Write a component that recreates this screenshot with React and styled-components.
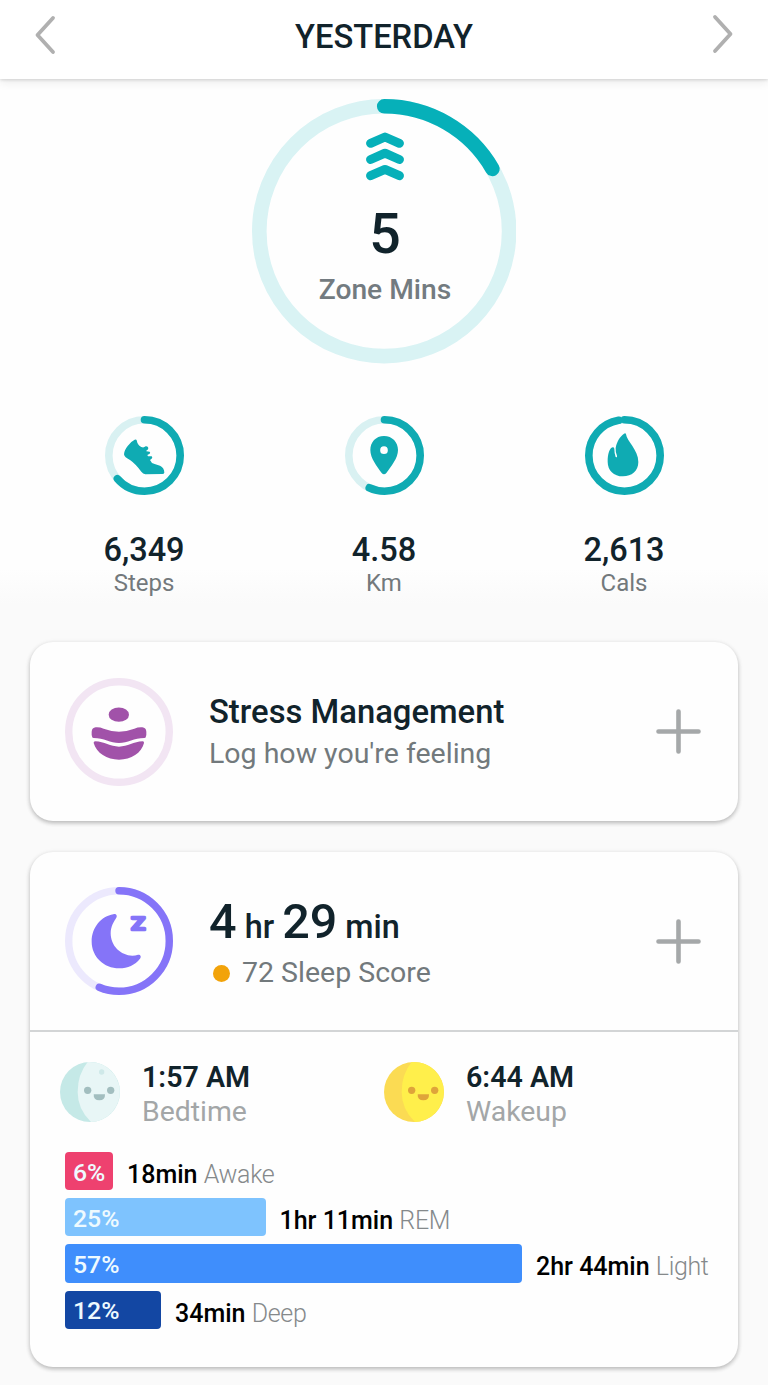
import styled, { createGlobalStyle } from "styled-components";

const stats = [
  { id: "steps", value: "6,349", label: "Steps", degrees: 229 },
  { id: "km", value: "4.58", label: "Km", degrees: 205 },
  { id: "cals", value: "2,613", label: "Cals", degrees: 350 },
];

const stages = [
  { name: "Awake", percent: 6, time: "18min", width: 48, color: "#ee416f" },
  { name: "REM", percent: 25, time: "1hr 11min", width: 200.5, color: "#7ec3fe" },
  { name: "Light", percent: 57, time: "2hr 44min", width: 457, color: "#3f8efc" },
  { name: "Deep", percent: 12, time: "34min", width: 96, color: "#1347a3" },
];

function Ring({ size, stroke, degrees, color, track, children }) {
  const c = size / 2;
  const r = c - stroke / 2;
  const length = 2 * Math.PI * r;
  return (
    <RingBox $size={size}>
      <svg width={size} height={size} fill="none" strokeWidth={stroke}>
        <circle cx={c} cy={c} r={r} stroke={track} />
        {degrees && (
          <circle
            cx={c}
            cy={c}
            r={r}
            stroke={color}
            strokeLinecap="round"
            strokeDasharray={`${(length * degrees) / 360} ${length}`}
            transform={`rotate(-90 ${c} ${c})`}
          />
        )}
      </svg>
      {children}
    </RingBox>
  );
}

function ZoneIcon() {
  return (
    <svg
      width="38"
      height="49"
      fill="none"
      stroke="#06b0b9"
      strokeWidth="9"
      strokeLinecap="round"
      strokeLinejoin="round"
    >
      <path d="M4.6 11.3 19 5 33.4 11.3" />
      <path d="M4.6 27.5 19 21.2 33.4 27.5" />
      <path d="M4.6 43.7 19 37.4 33.4 43.7" />
    </svg>
  );
}

function StatIcon({ id }) {
  return (
    <svg width="79" height="79" viewBox="0 0 237 237" fill="#0fabb3">
      {id === "steps" && (
        <path d="M89 71Q94 69 95 73Q98 89 109 93Q116 96 122 91Q129 90 130 96Q130 101 125 103L124 106L134 107Q137 110 134 113L127 117L129 121L140 121Q144 124 140 128L135 132Q138 141 149 144L165 149Q178 155 178 170Q177 174 172 174L121 175Q114 174 109 167Q91 143 75 132Q58 124 57 115Q57 104 68 90Q78 76 89 71Z" />
      )}
      {id === "km" && (
        <path
          fillRule="evenodd"
          d="M117 60C92 60 76 79 76 102C76 127 96 151 110 171Q117 179 124 171C138 151 159 127 159 102C159 79 142 60 117 60ZM117 91A11.500 11.500 0 1 1 117 114A11.500 11.500 0 1 1 117 91Z"
        />
      )}
      {id === "cals" && (
        <path d="M117 53Q122 50 123 55C125 75 160 102 160 138C160 165 140 181 114 181C86 181 68 163 68 137C68 114 73 97 83 94Q88 93 88 99Q88 113 92 123Q97 126 96 119Q91 108 92 96C95 78 104 62 117 53Z" />
      )}
    </svg>
  );
}

function StressIcon() {
  return (
    <svg width="108" height="108" viewBox="0 0 324 324" fill="#a152a9">
      <ellipse cx="161.500" cy="110" rx="30.500" ry="21.500" />
      <path d="M80 161Q81 149 92 148Q104 147 116 152Q140 161 162 161Q184 161 208 152Q220 147 232 148Q243 149 244 161Q245 170 242 178Q242 180 238 180C207 180 188 195 162 195C136 195 117 180 86 180Q82 180 82 178Q79 170 80 161Z" />
      <path d="M91 190C118 191 136 206 162 206C188 206 206 191 233 190Q238 190 237 195C230 225 198 245 162 245C126 245 94 225 86 195Q85 190 91 190Z" />
    </svg>
  );
}

function SleepIcon() {
  return (
    <svg width="108" height="108" viewBox="0 0 324 324" fill="#8574f8">
      <path d="M145 82C153 79 158 86 154 92C147 103 137 117 137 139C137 177 168 206 202 206Q211 206 219 203C226 202 230 208 225 215C210 234 188 244 163 244C116 244 80 208 80 164C80 121 109 88 145 82Z" />
      <SleepLetter x="199" y="130" textLength="42" lengthAdjust="spacingAndGlyphs">
        Z
      </SleepLetter>
    </svg>
  );
}

function Face({ base, shade, ink, crater }) {
  return (
    <FaceSvg width="60" height="60" viewBox="0 0 180 180">
      <circle cx="90" cy="90" r="90" fill={shade} />
      <path d="M83 0.300A90 90 0 1 1 93 180Q53 142 53 90Q53 37 83 0.300Z" fill={base} />
      {crater && <circle cx="125" cy="30" r="8" fill={crater} />}
      <circle cx="83" cy="85" r="11" fill={ink} />
      <circle cx="152" cy="85" r="11" fill={ink} />
      <path d="M101 97H135Q136 115 118 115Q100 115 101 97Z" fill={ink} />
    </FaceSvg>
  );
}

function AddIcon() {
  return (
    <svg width="45" height="45" stroke="#a5a8a9" strokeWidth="4.6" strokeLinecap="round">
      <path d="M22.500 2.500V42.500M2.500 22.500H42.500" />
    </svg>
  );
}

function Arrow({ points }) {
  return (
    <svg
      width="24"
      height="42"
      fill="none"
      stroke="#b0b0b0"
      strokeWidth="3.8"
      strokeLinecap="round"
      strokeLinejoin="round"
    >
      <polyline points={points} />
    </svg>
  );
}

function App() {
  return (
    <Page>
      <GlobalStyle />
      <Header>
        <Arrow points="20,4 4.500,21 20,38" />
        <Title>YESTERDAY</Title>
        <Arrow points="4,3 19.500,20 4,37" />
      </Header>

      <Summary>
        <Ring size={264.4} stroke={14.6} degrees={60} color="#06b0b9" track="#d9f3f4">
          <ZoneContent>
            <ZoneIcon />
            <ZoneValue>5</ZoneValue>
            <ZoneLabel>Zone Mins</ZoneLabel>
          </ZoneContent>
        </Ring>
        <Stats>
          {stats.map((s) => (
            <Stat key={s.id}>
              <Ring size={79} stroke={7.6} degrees={s.degrees} color="#0fabb3" track="#d9f1f2">
                <StatIcon id={s.id} />
              </Ring>
              <StatValue>{s.value}</StatValue>
              <StatLabel>{s.label}</StatLabel>
            </Stat>
          ))}
        </Stats>
      </Summary>

      <Cards>
        <Card>
          <CardRow $height={179}>
            <Ring size={108} stroke={7.4} track="#f2e5f3">
              <StressIcon />
            </Ring>
            <CardText>
              <CardTitle>Stress Management</CardTitle>
              <CardSub>Log how you're feeling</CardSub>
            </CardText>
            <AddIcon />
          </CardRow>
        </Card>

        <Card>
          <CardRow $height={178}>
            <Ring size={108} stroke={7.4} degrees={202.8} color="#8574f8" track="#ece9fd">
              <SleepIcon />
            </Ring>
            <CardText>
              <Duration>
                <b>4</b> hr <b>29</b> min
              </Duration>
              <CardSub>
                <Dot />
                72 Sleep Score
              </CardSub>
            </CardText>
            <AddIcon />
          </CardRow>
          <Details>
            <Times>
              <Time>
                <Face base="#e8f6f6" shade="#c5e9e7" ink="#a2bebf" crater="#cfe9e9" />
                <div>
                  <TimeValue>1:57 AM</TimeValue>
                  <TimeLabel>Bedtime</TimeLabel>
                </div>
              </Time>
              <Time>
                <Face base="#ffef4b" shade="#fbdb53" ink="#dfa43a" />
                <div>
                  <TimeValue>6:44 AM</TimeValue>
                  <TimeLabel>Wakeup</TimeLabel>
                </div>
              </Time>
            </Times>
            <Stages>
              {stages.map((s) => (
                <Stage key={s.name}>
                  <Bar $color={s.color} style={{ width: s.width }}>
                    {s.percent}%
                  </Bar>
                  <StageText>
                    {s.time} <span>{s.name}</span>
                  </StageText>
                </Stage>
              ))}
            </Stages>
          </Details>
        </Card>
      </Cards>
    </Page>
  );
}

const GlobalStyle = createGlobalStyle`
  * {
    box-sizing: border-box;
  }
  body {
    margin: 0;
    background: #fafafa;
    color: #11232b;
    font-family: Roboto, "Liberation Sans", sans-serif;
    font-weight: 500;
  }
  svg {
    display: block;
    flex-shrink: 0;
  }
`;

const Page = styled.div`
  width: 768px;
  height: 1385px;
  overflow: hidden;
`;

const Header = styled.header`
  position: relative;
  display: flex;
  align-items: center;
  justify-content: space-between;
  height: 79px;
  padding: 0 33px 9px;
  background: #fff;
  box-shadow: 0 1px 3px rgba(0, 0, 0, 0.14), 0 4px 9px rgba(0, 0, 0, 0.07);
`;

const Title = styled.h1`
  margin: 3px 0 0;
  font-size: 32.7px;
  font-weight: 500;
  line-height: 40px;
`;

const Summary = styled.section`
  display: flex;
  flex-direction: column;
  align-items: center;
  height: 563px;
  padding-top: 20.3px;
  background: linear-gradient(#fefefe 490px, #fafafa 525px);
`;

const RingBox = styled.div`
  display: grid;
  flex-shrink: 0;
  width: ${({ $size }) => $size}px;
  height: ${({ $size }) => $size}px;
  > * {
    grid-area: 1 / 1;
  }
`;

const ZoneContent = styled.div`
  display: flex;
  flex-direction: column;
  align-items: center;
  padding: 33px 0 0 2px;
`;

const ZoneValue = styled.div`
  margin-top: 24px;
  font-size: 55.5px;
  line-height: 60px;
`;

const ZoneLabel = styled.div`
  margin-top: 8px;
  color: #737b80;
  font-size: 28.2px;
  line-height: 34px;
`;

const Stats = styled.div`
  display: grid;
  grid-template-columns: repeat(3, 240px);
  margin-top: 52px;
`;

const Stat = styled.div`
  display: flex;
  flex-direction: column;
  align-items: center;
`;

const StatValue = styled.div`
  margin-top: 37.3px;
  font-size: 32.5px;
  line-height: 36px;
`;

const StatLabel = styled.div`
  color: #73797c;
  font-size: 24px;
  font-weight: 400;
  line-height: 30px;
`;

const Cards = styled.main`
  display: flex;
  flex-direction: column;
  gap: 31px;
  padding: 0 30px;
`;

const Card = styled.section`
  border-radius: 23px;
  background: #fefefe;
  box-shadow: 0 2px 4px rgba(0, 0, 0, 0.24), 0 1px 6px rgba(0, 0, 0, 0.06);
`;

const CardRow = styled.div`
  display: flex;
  align-items: center;
  height: ${({ $height }) => $height}px;
  padding: 0 37px 0 35px;
`;

const CardText = styled.div`
  flex: 1;
  padding: 3px 0 0 36px;
`;

const CardTitle = styled.h2`
  margin: 0;
  padding-top: 1px;
  font-size: 32.8px;
  font-weight: 500;
  line-height: 41px;
`;

const CardSub = styled.div`
  display: flex;
  align-items: center;
  color: #72797c;
  font-size: 28.5px;
  font-weight: 400;
  line-height: 42px;
`;

const Duration = styled.div`
  height: 60px;
  padding-top: 5px;
  font-size: 32.4px;
  line-height: 60px;
  b {
    font-size: 48.5px;
    font-weight: 500;
    line-height: 40px;
  }
`;

const Dot = styled.span`
  width: 17px;
  height: 17px;
  margin: 2px 12px 0 4px;
  border-radius: 50%;
  background: #f2a30a;
`;

const SleepLetter = styled.text`
  font-size: 53px;
  font-weight: 500;
  stroke: #8574f8;
  stroke-width: 8px;
  stroke-linejoin: round;
`;

const Details = styled.div`
  height: 336.5px;
  padding: 29px 0 0 30px;
  border-top: 2px solid #d3d5d6;
`;

const Times = styled.div`
  display: grid;
  grid-template-columns: 324px 324px;
`;

const Time = styled.div`
  display: flex;
  align-items: flex-start;
  gap: 22px;
`;

const FaceSvg = styled.svg`
  margin-top: 1px;
`;

const TimeValue = styled.div`
  padding-bottom: 1px;
  font-size: 28.6px;
  font-weight: 600;
  line-height: 33px;
`;

const TimeLabel = styled.div`
  color: #a3a6a7;
  font-size: 28.4px;
  font-weight: 400;
  line-height: 34px;
`;

const Stages = styled.div`
  display: flex;
  flex-direction: column;
  gap: 8px;
  padding: 23px 0 0 5px;
`;

const Stage = styled.div`
  display: flex;
  gap: 14px;
  height: 38.2px;
`;

const Bar = styled.div`
  flex-shrink: 0;
  padding: 1.5px 0 0 8px;
  border-radius: 4px;
  background: ${({ $color }) => $color};
  color: #eefaff;
  font-size: 24.8px;
  line-height: 38px;
`;

const StageText = styled.div`
  padding-top: 4px;
  color: #000;
  font-size: 25px;
  line-height: 38px;
  white-space: nowrap;
  span {
    color: #85898b;
    font-weight: 300;
    letter-spacing: -0.35px;
  }
`;

export default App;
